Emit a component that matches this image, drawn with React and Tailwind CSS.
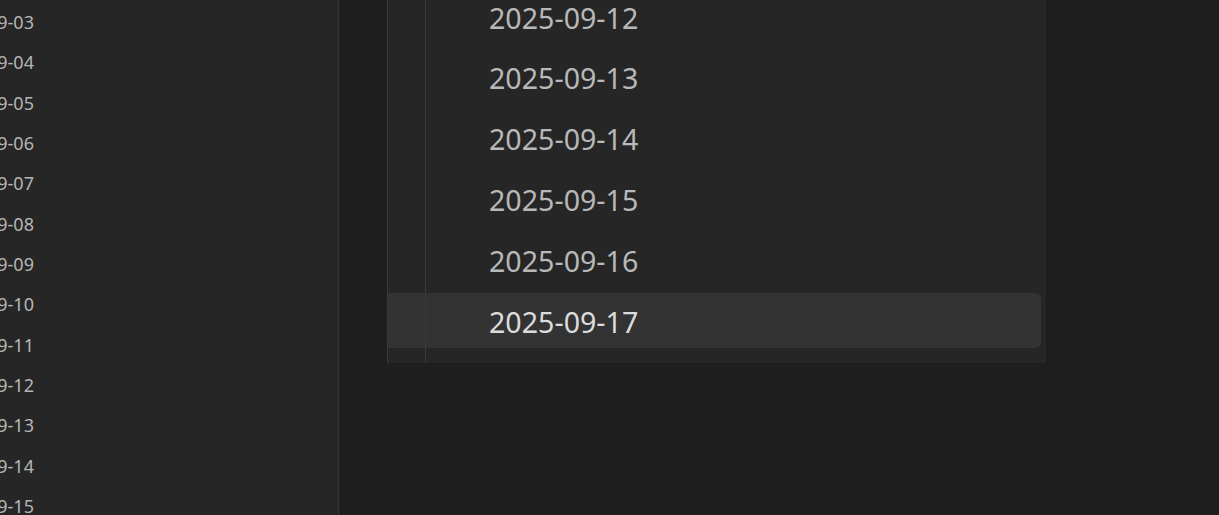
const sideDates = [
  "2025-09-03", "2025-09-04", "2025-09-05", "2025-09-06", "2025-09-07",
  "2025-09-08", "2025-09-09", "2025-09-10", "2025-09-11", "2025-09-12",
  "2025-09-13", "2025-09-14", "2025-09-15",
];

const mainDates = ["2025-09-12", "2025-09-13", "2025-09-14", "2025-09-15", "2025-09-16", "2025-09-17"];

export default function App() {
  return (
    <div className="flex h-[515px] w-[1219px] overflow-hidden bg-[#1e1e1e] font-['Noto_Sans','Open_Sans',sans-serif]">
      {/* left file list, scrolled sideways */}
      <aside className="w-[339px] shrink-0 overflow-hidden border-r border-[#333333] bg-[#262626]">
        <div className="-ml-[60px] flex flex-col pt-[2.5px]">
          {sideDates.map((d) => (
            <div key={d} className="flex h-[40.33px] items-center whitespace-nowrap text-[18px] text-[#b5b5b5]">
              {d}
            </div>
          ))}
        </div>
      </aside>

      <main className="flex-1 pl-[48px]">
        <div className="relative w-[659px] border-l border-[#3a3a3a] bg-[#262626]">
          <div className="-mt-[11px] flex flex-col gap-[5.8px] pb-[15px] pr-[5px]">
            {mainDates.map((d, i) => {
              const active = i === mainDates.length - 1;
              return (
                <div
                  key={d}
                  className={
                    "flex h-[55px] items-center rounded-r-[6px] pl-[101px] pt-[3px] text-[28.6px] " +
                    (active ? "bg-[#333333] text-[#dcdcdc]" : "text-[#b8b8b8]")
                  }
                >
                  {d}
                </div>
              );
            })}
          </div>
          {/* indent guide */}
          <div className="pointer-events-none absolute bottom-0 left-[37px] top-0 w-px bg-[#3a3a3a]" />
        </div>
      </main>
    </div>
  );
}
